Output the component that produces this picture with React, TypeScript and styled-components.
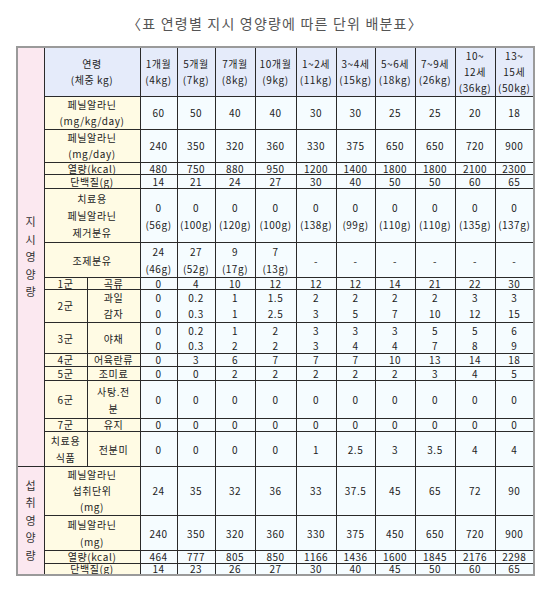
import React, { FC } from 'react';
import styled, { createGlobalStyle } from 'styled-components';

const GlobalStyle = createGlobalStyle`
    html, body {
        margin: 0;
        padding: 0;
        background: #ffffff;
    }
`

const Page = styled.div`
    width: 550px;
    padding: 0 16px;
    box-sizing: border-box;
    font-family: "Noto Sans CJK KR", sans-serif;
`

const Title = styled.h1`
    margin: 0;
    height: 45px;
    display: flex;
    align-items: center;
    justify-content: center;
    padding-bottom: 1px;
    font-size: 14px;
    font-weight: 400;
    letter-spacing: 1.2px;
    color: #555555;
`

const Table = styled.table`
    width: 517px;
    table-layout: fixed;
    border-collapse: collapse;
    border: 2px solid #9a9a9a;
    font-size: 10px;
    color: #222222;
`

const Row = styled.tr<{ $h: number; $lh: number }>`
    height: ${p => p.$h}px;
    line-height: ${p => p.$lh}px;
`

type Kind = 'sec' | 'label' | 'head' | 'data';

const bg: Record<Kind, string> = {
    sec: '#fbe8f0',
    label: '#fffbe4',
    head: '#e5ebfa',
    data: '#f5fcff',
};

const Cell = styled.td<{ $kind: Kind }>`
    padding: 0;
    border: 1px solid #2a2a2a;
    text-align: center;
    vertical-align: middle;
    white-space: nowrap;
    overflow: hidden;
    background: ${p => bg[p.$kind]};
    letter-spacing: ${p => (p.$kind === 'label' || p.$kind === 'head' ? '0.6px' : '0.5px')};
`

const Vertical = styled.div`
    display: flex;
    flex-direction: column;
    align-items: center;
    line-height: 17.5px;
    font-size: 11px;
    color: #333333;
`

const ages = [
    ['1개월', '(4kg)'],
    ['5개월', '(7kg)'],
    ['7개월', '(8kg)'],
    ['10개월', '(9kg)'],
    ['1~2세', '(11kg)'],
    ['3~4세', '(15kg)'],
    ['5~6세', '(18kg)'],
    ['7~9세', '(26kg)'],
    ['10~', '12세', '(36kg)'],
    ['13~', '15세', '(50kg)'],
];

type RowDef = {
    h: number;
    lh: number;
    label: string[];
    sub?: string[];
    values: string[][];
};

const split = (s: string) => s.split(' ').map(v => v.split('/'));

// row heights follow the reference; line-height must stay under h - 1 or the row grows
const prescribed: RowDef[] = [
    { h: 33, lh: 16, label: ['페닐알라닌', '(mg/kg/day)'], values: split('60 50 40 40 30 30 25 25 20 18') },
    { h: 33, lh: 16, label: ['페닐알라닌', '(mg/day)'], values: split('240 350 320 360 330 375 650 650 720 900') },
    { h: 12, lh: 11, label: ['열량(kcal)'], values: split('480 750 880 950 1200 1400 1800 1800 2100 2300') },
    { h: 14, lh: 12, label: ['단백질(g)'], values: split('14 21 24 27 30 40 50 50 60 65') },
    {
        h: 54, lh: 17, label: ['치료용', '페닐알라닌', '제거분유'],
        values: split('0/(56g) 0/(100g) 0/(120g) 0/(100g) 0/(138g) 0/(99g) 0/(110g) 0/(110g) 0/(135g) 0/(137g)'),
    },
    { h: 35, lh: 17, label: ['조제분유'], values: split('24/(46g) 27/(52g) 9/(17g) 7/(13g) - - - - - -') },
    { h: 12, lh: 11, label: ['1군'], sub: ['곡류'], values: split('0 4 10 12 12 12 14 21 22 30') },
    { h: 33, lh: 16, label: ['2군'], sub: ['과일', '감자'], values: split('0/0 0.2/0.3 1/1 1.5/2.5 2/3 2/5 2/7 2/10 3/12 3/15') },
    { h: 31, lh: 15, label: ['3군'], sub: ['야채'], values: split('0/0 0.2/0.3 1/2 2/2 3/3 3/4 3/4 5/7 5/8 6/9') },
    { h: 13, lh: 12, label: ['4군'], sub: ['어육란류'], values: split('0 3 6 7 7 7 10 13 14 18') },
    { h: 14, lh: 12, label: ['5군'], sub: ['조미료'], values: split('0 0 2 2 2 2 2 3 4 5') },
    { h: 38, lh: 17, label: ['6군'], sub: ['사탕.전', '분'], values: split('0 0 0 0 0 0 0 0 0 0') },
    { h: 13, lh: 12, label: ['7군'], sub: ['유지'], values: split('0 0 0 0 0 0 0 0 0 0') },
    { h: 35, lh: 17, label: ['치료용', '식품'], sub: ['전분미'], values: split('0 0 0 0 1 2.5 3 3.5 4 4') },
];

const intake: RowDef[] = [
    { h: 49, lh: 16, label: ['페닐알라닌', '섭취단위', '(mg)'], values: split('24 35 32 36 33 37.5 45 65 72 90') },
    { h: 35, lh: 17, label: ['페닐알라닌', '(mg)'], values: split('240 350 320 360 330 375 450 650 720 900') },
    { h: 13, lh: 12, label: ['열량(kcal)'], values: split('464 777 805 850 1166 1436 1600 1845 2176 2298') },
    { h: 11, lh: 10, label: ['단백질(g)'], values: split('14 23 26 27 30 40 45 50 60 65') },
];

const Lines: FC<{ lines: string[] }> = ({ lines }) => (
    <>
        {lines.map((l, i) => (
            <React.Fragment key={i}>
                {i > 0 && <br />}
                {l}
            </React.Fragment>
        ))}
    </>
);

const VerticalText: FC<{ text: string }> = ({ text }) => (
    <Vertical>
        {text.split('').map((c, i) => <span key={i}>{c}</span>)}
    </Vertical>
);

const DataRow: FC<{ row: RowDef; section?: React.ReactNode }> = ({ row, section }) => (
    <Row $h={row.h} $lh={row.lh}>
        {section}
        {row.sub ? (
            <>
                <Cell $kind="label"><Lines lines={row.label} /></Cell>
                <Cell $kind="label"><Lines lines={row.sub} /></Cell>
            </>
        ) : (
            <Cell $kind="label" colSpan={2}><Lines lines={row.label} /></Cell>
        )}
        {row.values.map((v, i) => (
            <Cell $kind="data" key={i}><Lines lines={v} /></Cell>
        ))}
    </Row>
);

const widths = [27, 43, 53, 37, 38, 40, 41, 40, 39, 40, 40, 40, 39];

const App: FC = () => {
    return (
        <Page>
            <GlobalStyle />
            <Title>〈표 연령별 지시 영양량에 따른 단위 배분표〉</Title>
            <Table>
                <colgroup>
                    {widths.map((w, i) => <col key={i} style={{ width: w }} />)}
                </colgroup>
                <tbody>
                    <Row $h={49} $lh={16}>
                        <Cell $kind="sec" rowSpan={prescribed.length + 1}>
                            <VerticalText text="지시영양량" />
                        </Cell>
                        <Cell $kind="head" colSpan={2}>
                            <Lines lines={['연령', '(체중 kg)']} />
                        </Cell>
                        {ages.map((a, i) => (
                            <Cell $kind="head" key={i}><Lines lines={a} /></Cell>
                        ))}
                    </Row>
                    {prescribed.map((r, i) => <DataRow row={r} key={i} />)}
                    {intake.map((r, i) => (
                        <DataRow
                            row={r}
                            key={i}
                            section={i === 0 ? (
                                <Cell $kind="sec" rowSpan={intake.length}>
                                    <VerticalText text="섭취영양량" />
                                </Cell>
                            ) : undefined}
                        />
                    ))}
                </tbody>
            </Table>
        </Page>
    );
}

export default App;
